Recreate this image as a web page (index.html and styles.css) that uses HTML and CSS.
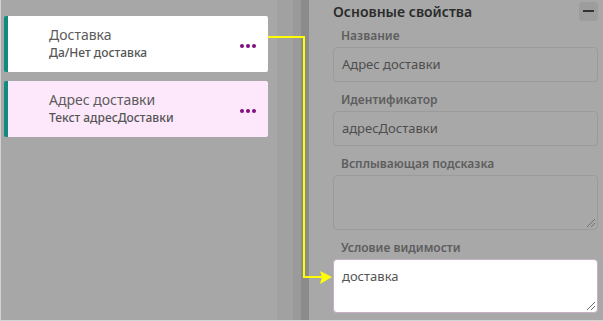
FILE: index.html
```html
<!DOCTYPE html>
<html lang="ru">
<head>
	<meta charset="UTF-8">
	<meta name="viewport" content="width=device-width, initial-scale=1.0">
	<title>Форма</title>
	<link rel="stylesheet" href="styles.css">
</head>
<body>
	<div class="page">
		<div class="fields">
			<div class="card">
				<div class="card-text">
					<div class="card-title">Доставка</div>
					<div class="card-sub">Да/Нет доставка</div>
				</div>
				<span class="dots"><i></i><i></i><i></i></span>
			</div>
			<div class="card card-active">
				<div class="card-text">
					<div class="card-title">Адрес доставки</div>
					<div class="card-sub">Текст адресДоставки</div>
				</div>
				<span class="dots"><i></i><i></i><i></i></span>
			</div>
		</div>
		<div class="gutter">
			<div class="gutter-light"></div>
			<div class="gutter-mid"></div>
			<div class="gutter-dark"></div>
		</div>
		<div class="props">
			<div class="props-head">
				<h2>Основные свойства</h2>
				<span class="collapse"><i></i></span>
			</div>
			<label class="prop-label">Название</label>
			<div class="prop-input">Адрес доставки</div>
			<label class="prop-label">Идентификатор</label>
			<div class="prop-input">адресДоставки</div>
			<label class="prop-label">Всплывающая подсказка</label>
			<div class="prop-area"><span class="grip"></span></div>
			<label class="prop-label">Условие видимости</label>
			<div class="prop-area prop-focus">доставка<span class="grip"></span></div>
		</div>
		<!-- connector from the card to the visibility condition -->
		<svg class="arrow" width="603" height="321" viewBox="0 0 603 321">
			<polyline points="268,37 304,37 304,277 322,277" fill="none" stroke="#ffff00" stroke-width="2"/>
			<polygon points="332,277 320,271 322,277 320,284" fill="#ffff00"/>
		</svg>
	</div>
</body>
</html>
```

FILE: styles.css
```css
body {
	margin: 0;
	padding: 0;
	font-family: "Noto Sans", "Open Sans", sans-serif;
	background-color: #a6a6a6;
	overflow: hidden;
}
.page {
	position: relative;
	display: flex;
	width: 602px;
	height: 320px;
	border-left: 1px solid #d2d2d2;
	border-bottom: 1px solid #d2d2d2;
	background-color: #a7a7a7;
}
.fields {
	width: 273px;
	padding: 16px 0 0 3px;
	display: flex;
	flex-direction: column;
	gap: 9px;
}
.card {
	display: flex;
	align-items: center;
	width: 260px;
	height: 56px;
	border-left: 4px solid #128a80;
	border-radius: 2px;
	background-color: #fff;
	box-sizing: content-box;
}
.card-active {
	background-color: #fde8fb;
}
.card-text {
	flex: 1;
	padding-left: 41px;
	padding-bottom: 2px;
}
.card-title {
	font-size: 14px;
	line-height: 20px;
	color: #5c5c5c;
}
.card-sub {
	font-size: 12px;
	font-weight: 500;
	line-height: 16px;
	color: #555;
}
.dots {
	display: flex;
	gap: 2px;
	margin-right: 12px;
	margin-top: 4px;
}
.dots i {
	width: 4px;
	height: 4px;
	border-radius: 50%;
	background-color: #80107e;
}
.gutter {
	display: flex;
}
.gutter-light {
	width: 16px;
	background-color: #a1a1a2;
}
.gutter-mid {
	width: 8px;
	background-color: #9a9a9a;
}
.gutter-dark {
	width: 8px;
	background-color: #8b8b8b;
}
.props {
	flex: 1;
	padding: 1px 5px 0 24px;
	display: flex;
	flex-direction: column;
	background-color: #a8a8a8;
}
.props-head {
	display: flex;
	justify-content: space-between;
	align-items: center;
	height: 20px;
}
.props-head h2 {
	margin: 0;
	font-size: 14px;
	font-weight: 600;
	color: #2b2b2b;
}
.collapse {
	display: flex;
	align-items: center;
	justify-content: center;
	width: 19px;
	height: 19px;
	border-radius: 4px;
	background-color: #9d9d9d;
}
.collapse i {
	width: 11px;
	height: 2px;
	background-color: #333;
}
.prop-label {
	display: block;
	margin: 10px 0 4px 8px;
	font-size: 12px;
	font-weight: 600;
	line-height: 15px;
	color: #5e5e5e;
}
.props-head + .prop-label {
	margin-top: 7px;
}
.prop-input, .prop-area {
	position: relative;
	height: 33px;
	padding: 0 8px;
	border: 1px solid #9b9b9b;
	border-radius: 4px;
	font-size: 13px;
	line-height: 33px;
	color: #4e4e4e;
}
.prop-area {
	height: 53px;
	line-height: 20px;
}
.prop-focus {
	height: 46px;
	padding-top: 6px;
	background-color: #fff;
	border-color: #c9aec8;
	color: #555;
}
.grip {
	position: absolute;
	right: 2px;
	bottom: 2px;
	width: 8px;
	height: 8px;
	background: linear-gradient(135deg, transparent 45%, #707070 45%, #707070 55%, transparent 55%, transparent 70%, #707070 70%, #707070 80%, transparent 80%);
}
.arrow {
	position: absolute;
	left: -1px;
	top: 0;
}
```
